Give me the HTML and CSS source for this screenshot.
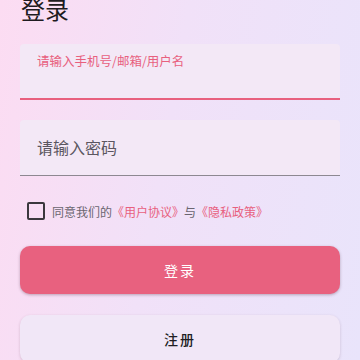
FILE: index.html
```html
<!DOCTYPE html>
<html lang="zh-CN">
<head>
<meta charset="UTF-8">
<meta name="viewport" content="width=device-width, initial-scale=1.0">
<title>登录</title>
<link rel="stylesheet" href="styles.css">
</head>
<body>
  <div class="page">
    <h1 class="title">登录</h1>

    <div class="field field-active">
      <span class="field-label">请输入手机号/邮箱/用户名</span>
    </div>

    <div class="field">
      <span class="field-placeholder">请输入密码</span>
    </div>

    <div class="agree">
      <span class="checkbox"></span>
      <span class="agree-text">同意我们的<a class="link">《用户协议》</a>与<a class="link">《隐私政策》</a></span>
    </div>

    <button class="btn btn-primary" type="button">登录</button>
    <button class="btn btn-secondary" type="button">注册</button>
  </div>
</body>
</html>
```

FILE: styles.css
```css
/* pink / lavender theme */
body {
  margin: 0;
  padding: 0;
  height: 360px;
  overflow: hidden;
  font-family: "Noto Sans CJK SC", "Noto Sans", sans-serif;
  background: linear-gradient(100deg, #fcdcf2 0%, #f1e1f8 45%, #e9e4fb 100%);
  color: #222;
}

.page {
  padding: 0 20px;
  display: flex;
  flex-direction: column;
}

.title {
  margin: -7px 0 0 1px;
  font-size: 24px;
  line-height: 32px;
  font-weight: 400;
  color: #1e1b20;
}

.field {
  margin-top: 20px;
  height: 55px;
  background-color: #f3e8f6;
  border-bottom: 1px solid #8d8891;
  border-radius: 4px 4px 0 0;
  padding: 0 16px;
  display: flex;
  align-items: center;
}

.field-active {
  margin-top: 19px;
  height: 54px;
  border-bottom: 2px solid #e8607e;
  align-items: flex-start;
}

.field-label {
  margin-top: 8px;
  margin-left: 1px;
  font-size: 12.5px;
  line-height: 18px;
  color: #e8607e;
}

.field-placeholder {
  margin-left: 1px;
  margin-top: -2px;
  font-size: 16px;
  color: #5b5660;
}

.agree {
  margin-top: 26px;
  display: flex;
  align-items: center;
  padding-left: 7px;
}

.checkbox {
  width: 14px;
  height: 14px;
  border: 2px solid #3b383d;
  border-radius: 2px;
  margin-right: 7px;
}

.agree-text {
  font-size: 12px;
  color: #6a6570;
}

.link {
  color: #e8607e;
}

.btn {
  height: 48px;
  border: none;
  border-radius: 10px;
  font-family: inherit;
  font-size: 14px;
  letter-spacing: 2px;
  cursor: pointer;
}

.btn-primary {
  margin-top: 26px;
  background-color: #e8617f;
  color: #fff;
  box-shadow: 0 1px 3px rgba(80, 40, 60, 0.35);
}

.btn-secondary {
  margin-top: 21px;
  background-color: #f1e7f7;
  color: #211e24;
  font-weight: 500;
  box-shadow: 0 1px 3px rgba(80, 40, 60, 0.2);
}
```
